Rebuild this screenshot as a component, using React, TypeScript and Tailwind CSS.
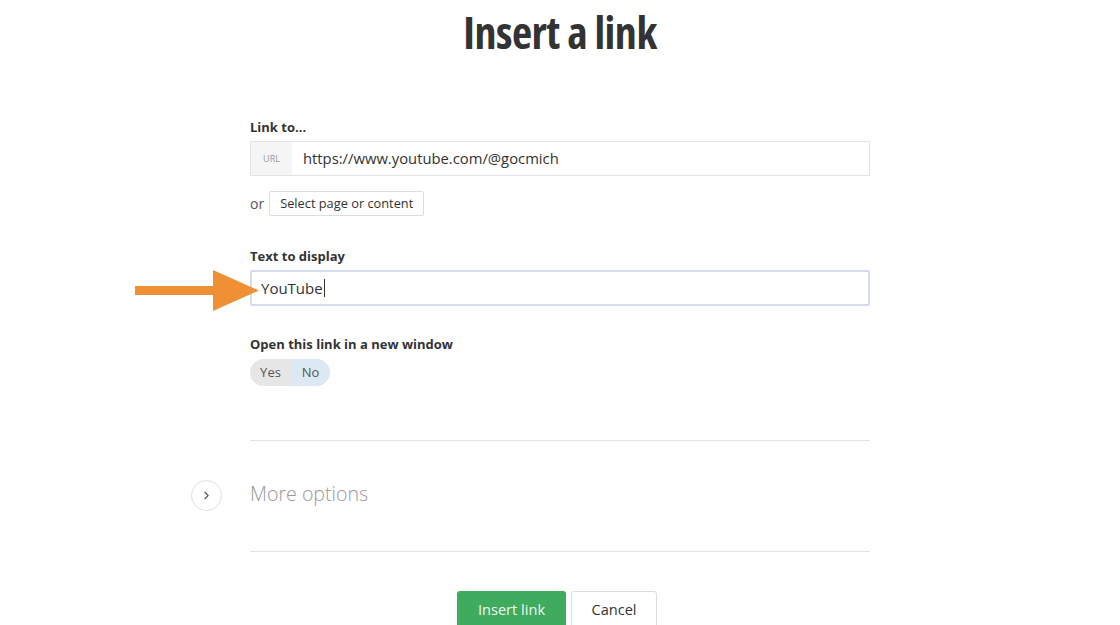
import { ChevronRight } from 'lucide-react';

export default function App() {
  return (
    <div className="w-[1120px] h-[625px] overflow-hidden bg-white font-['Open_Sans',sans-serif] text-[#333]">
      <h1 className="pt-[7px] text-center text-[44px] leading-[50px] font-bold font-stretch-condensed tracking-[-0.5px] text-[#333]">
        Insert a link
      </h1>

      <div className="mx-auto mt-[61px] w-[620px]">
        <label className="block text-[13px] font-bold leading-[18px]">Link to...</label>
        <div className="mt-[5px] flex h-[35px] border border-[#e3e3e3]">
          <div className="flex w-[41px] items-center justify-center bg-[#f5f5f5] text-[9px] text-[#999]">URL</div>
          <div className="flex items-center pl-[11px] text-[14.8px] text-[#333]">https://www.youtube.com/@gocmich</div>
        </div>

        <div className="mt-[15px] flex items-center gap-[5px]">
          <span className="text-[14px] text-[#555]">or</span>
          <button className="h-[25px] rounded-[2px] border border-[#ddd] bg-white px-[10px] text-[12.8px] text-[#333]">
            Select page or content
          </button>
        </div>

        <label className="mt-[31px] block text-[13px] font-bold leading-[18px]">Text to display</label>
        <div className="relative mt-[5px] flex h-[36px] items-center rounded-[2px] border-2 border-[#d3ddeb] pl-[9px] text-[15px] text-[#333]">
          YouTube<span className="ml-[1px] inline-block h-[18px] w-[1px] bg-[#333]"></span>
          <svg className="absolute left-[-117px] top-[-2px]" width="125" height="42" viewBox="0 0 125 42">
            <rect x="0" y="16" width="82" height="9" fill="#f09035" />
            <polygon points="78,0 124,20.5 78,41" fill="#f09035" />
          </svg>
        </div>

        <label className="mt-[29px] block text-[13px] font-bold leading-[18px]">Open this link in a new window</label>
        <div className="mt-[6px] flex h-[27px] w-[80px] overflow-hidden rounded-full text-[13px] text-[#555]">
          <div className="flex w-[41px] items-center justify-center bg-[#e6e6e6]">Yes</div>
          <div className="flex flex-1 items-center justify-center bg-[#dce9f4]">No</div>
        </div>

        <div className="mt-[54px] border-t border-[#e3e3e3]"></div>
        <div className="relative flex h-[110px] items-center pb-[4px]">
          <div className="absolute left-[-59px] top-[39px] flex h-[31px] w-[31px] items-center justify-center rounded-full border border-[#e0e0e0] bg-white">
            <ChevronRight className="h-[13px] w-[13px] text-[#555]" strokeWidth={2} />
          </div>
          <span className="text-[19.6px] font-light text-[#999]">More options</span>
        </div>
        <div className="border-t border-[#e3e3e3]"></div>

        <div className="mt-[39px] flex justify-center gap-[5px] pr-[6px]">
          <button className="h-[38px] w-[109px] rounded-[3px] bg-[#3fab5e] text-[14.6px] text-[#eef8f1]">Insert link</button>
          <button className="h-[38px] w-[86px] rounded-[3px] border border-[#ddd] bg-white text-[14.6px] text-[#333]">Cancel</button>
        </div>
      </div>
    </div>
  );
}
